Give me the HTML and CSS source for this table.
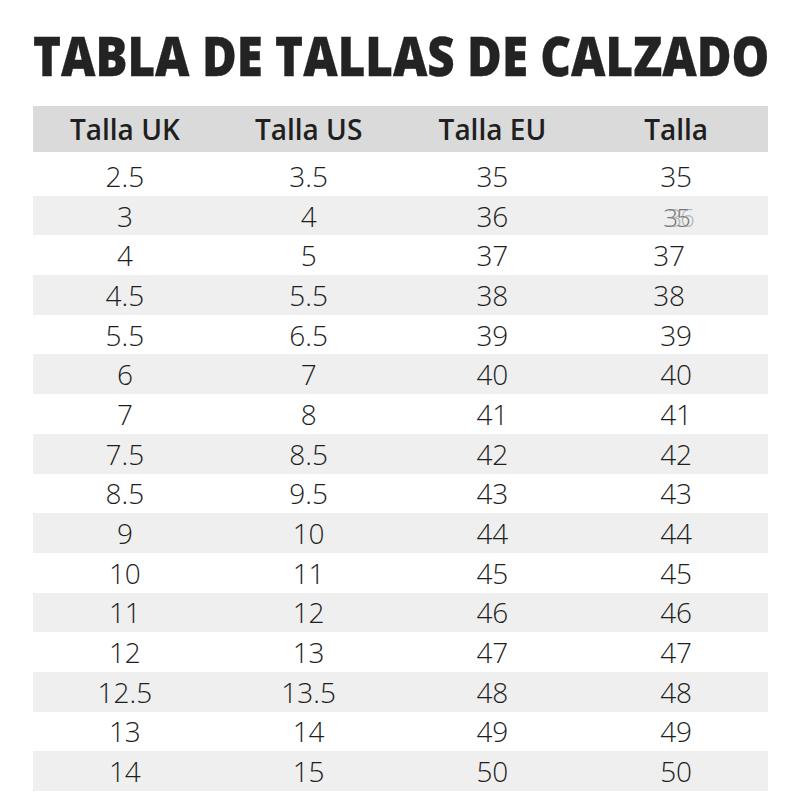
FILE: index.html
```html
<!DOCTYPE html>
<html lang="es">
<head>
<meta charset="utf-8">
<title>Tabla de tallas de calzado</title>
<link rel="stylesheet" href="styles.css">
</head>
<body>
<div class="page">
  <h1 class="title"><span class="title-text">TABLA DE TALLAS DE CALZADO</span></h1>
  <div class="table">
    <div class="row head">
      <div class="cell">Talla UK</div><div class="cell">Talla US</div><div class="cell">Talla EU</div><div class="cell">Talla</div>
    </div>
    <div class="row"><div class="cell">2.5</div><div class="cell">3.5</div><div class="cell">35</div><div class="cell c4">35</div></div>
    <div class="row alt"><div class="cell">3</div><div class="cell">4</div><div class="cell">36</div><div class="cell c4"><span class="ghost">35<span class="ghost-over">36</span></span></div></div>
    <div class="row"><div class="cell">4</div><div class="cell">5</div><div class="cell">37</div><div class="cell c4 shift">37</div></div>
    <div class="row alt"><div class="cell">4.5</div><div class="cell">5.5</div><div class="cell">38</div><div class="cell c4 shift">38</div></div>
    <div class="row"><div class="cell">5.5</div><div class="cell">6.5</div><div class="cell">39</div><div class="cell c4">39</div></div>
    <div class="row alt"><div class="cell">6</div><div class="cell">7</div><div class="cell">40</div><div class="cell c4">40</div></div>
    <div class="row"><div class="cell">7</div><div class="cell">8</div><div class="cell">41</div><div class="cell c4">41</div></div>
    <div class="row alt"><div class="cell">7.5</div><div class="cell">8.5</div><div class="cell">42</div><div class="cell c4">42</div></div>
    <div class="row"><div class="cell">8.5</div><div class="cell">9.5</div><div class="cell">43</div><div class="cell c4">43</div></div>
    <div class="row alt"><div class="cell">9</div><div class="cell">10</div><div class="cell">44</div><div class="cell c4">44</div></div>
    <div class="row"><div class="cell">10</div><div class="cell">11</div><div class="cell">45</div><div class="cell c4">45</div></div>
    <div class="row alt"><div class="cell">11</div><div class="cell">12</div><div class="cell">46</div><div class="cell c4">46</div></div>
    <div class="row"><div class="cell">12</div><div class="cell">13</div><div class="cell">47</div><div class="cell c4">47</div></div>
    <div class="row alt"><div class="cell">12.5</div><div class="cell">13.5</div><div class="cell">48</div><div class="cell c4">48</div></div>
    <div class="row"><div class="cell">13</div><div class="cell">14</div><div class="cell">49</div><div class="cell c4">49</div></div>
    <div class="row alt"><div class="cell">14</div><div class="cell">15</div><div class="cell">50</div><div class="cell c4">50</div></div>
  </div>
</div>
</body>
</html>
```

FILE: styles.css
```css
html, body {
  margin: 0;
  padding: 0;
  background: #ffffff;
}

.page {
  width: 800px;
  height: 800px;
  overflow: hidden;
  padding: 0 32px 0 33px;
  box-sizing: border-box;
}

.title {
  margin: 0;
  height: 106px;
  padding-top: 24px;
  box-sizing: border-box;
  font-family: "Open Sans", "Liberation Sans", sans-serif;
  font-weight: 800;
  font-size: 55px;
  line-height: 62px;
  color: #232323;
  white-space: nowrap;
}

.title-text {
  display: inline-block;
  transform: scaleX(0.863);
  transform-origin: left center;
  -webkit-text-stroke: 0.3px #232323;
}

.table {
  width: 735px;
  display: flex;
  flex-direction: column;
}

.row {
  display: grid;
  grid-template-columns: repeat(4, 1fr);
  height: 39.7px;
  align-items: center;
  font-family: "Open Sans", "Liberation Sans", sans-serif;
  font-weight: 300;
  font-size: 28px;
  color: #1e1e1e;
}

.row.head {
  height: 46px;
  margin-bottom: 4px;
  background: #dadada;
  font-weight: 600;
  font-size: 28px;
  color: #1f1f1f;
}

.row.alt {
  background: #efefef;
}

.cell {
  text-align: center;
  line-height: 1;
}

.shift {
  padding-right: 14px;
}

.ghost {
  position: relative;
  display: inline-block;
  color: #5a5a5a;
  font-size: 26px;
  letter-spacing: -2px;
  opacity: 0.8;
}

.ghost-over {
  position: absolute;
  left: 4px;
  top: 0;
  color: #7a7a7a;
  opacity: 0.6;
}
```
